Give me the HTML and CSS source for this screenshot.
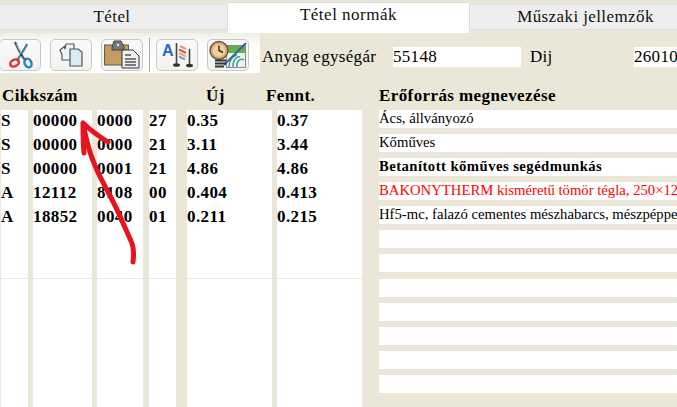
FILE: index.html
```html
<!DOCTYPE html>
<html lang="hu">
<head>
<meta charset="utf-8">
<title>Tétel normák</title>
<link rel="stylesheet" href="styles.css">
</head>
<body>
<nav class="tabs">
  <div class="tab tab-first">Tétel</div>
  <div class="tab tab-active">Tétel normák</div>
  <div class="tab tab-last">Műszaki jellemzők</div>
</nav>
<div class="bar">
  <div class="tools">
    <button class="tool tool-cut">
      <svg width="26" height="28" viewBox="0 0 26 28"><path d="M8 1 C10 6 13 12 17 18" stroke="#4d5560" stroke-width="2.200" fill="none"/><path d="M20 3 C18 8 14 13 11 18" stroke="#3f80ad" stroke-width="2.200" fill="none"/><path d="M9.500 3 L14 12" stroke="#d7dde2" stroke-width=".8" fill="none"/><circle cx="14.500" cy="14" r="1" fill="#333"/><ellipse cx="7.500" cy="22" rx="4.500" ry="3.300" fill="none" stroke="#d8383a" stroke-width="2.500" transform="rotate(-25 7.500 22)"/><ellipse cx="21" cy="22" rx="3.300" ry="4.500" fill="none" stroke="#2f86b8" stroke-width="2.500" transform="rotate(-25 21 22)"/><path d="M11.500 17.500 L10 20" stroke="#c33" stroke-width="2.500"/><path d="M17 17.500 L19 19.500" stroke="#27a" stroke-width="2.500"/></svg>
    </button>
    <button class="tool tool-copy">
      <svg width="24" height="24" viewBox="0 0 24 24"><path d="M1 7 L6 3 V6 L7 1 H15 V17 H3 V12 Z" fill="#f0f3f4" stroke="#555" stroke-width="1.200" stroke-linejoin="round"/><path d="M11 6 H19 L23 9 V23 H11 Z" fill="#d9ebf4" stroke="#555" stroke-width="1.200" stroke-linejoin="round"/></svg>
    </button>
    <button class="tool tool-paste">
      <svg width="36" height="30" viewBox="0 0 36 30"><rect x="0.500" y="5" width="24" height="20" fill="#c39c62" stroke="#6a5a3c"/><path d="M8 7 L10 1 H17 L20 7 V10 H8 Z" fill="#777" stroke="#444"/><circle cx="14" cy="5" r="1.300" fill="#ddd"/><path d="M18 10 H29 L35 16 V28 H18 Z" fill="#eef0f0" stroke="#333"/><path d="M21 15 H27 M21 19 H32 M21 22 H32 M21 25 H32" stroke="#555" stroke-width="1.300"/></svg>
    </button>
    <span class="sep"></span>
    <button class="tool tool-abc">
      <svg width="32" height="28" viewBox="0 0 32 28"><text class="icon-a" x="1" y="15">A</text><path d="M15.500 2 V24 M28.500 8 V24" stroke="#444" stroke-width="1.600"/><path d="M19 5 L25 8" stroke="#e09090" stroke-width="2"/><path d="M18 8.500 L25 12" stroke="#d8583a" stroke-width="2"/><path d="M18 12 L25 15.500" stroke="#e8b05a" stroke-width="2"/><path d="M18 15.500 L24 18.500" stroke="#7a9ad8" stroke-width="2"/><ellipse cx="15.500" cy="24" rx="3.500" ry="1.800" fill="#333"/><ellipse cx="28.500" cy="24.500" rx="3.500" ry="1.800" fill="#333"/></svg>
    </button>
    <button class="tool tool-plan">
      <svg width="38" height="30" viewBox="0 0 38 30"><rect x="17.500" y="5.500" width="19" height="22" fill="#eef5ee" stroke="#888"/><rect x="18" y="6" width="18" height="7" fill="#6cae48"/><path d="M20 27 A9 12 0 0 1 28 15 M24 27 A6 9 0 0 1 31 17 M28 27 A5 6 0 0 1 35 20" fill="none" stroke="#3f9c9c" stroke-width="1.500"/><path d="M15 25 L37 3" stroke="#2c6aa0" stroke-width="2"/><circle cx="10" cy="10.500" r="9" fill="#e8a868" stroke="#555" stroke-width="1.400"/><circle cx="10" cy="10.500" r="6.200" fill="#f3cfa4"/><path d="M10 5.500 V10.500 L14 12.500" fill="none" stroke="#333" stroke-width="1.500"/><path d="M6 20.500 H17 M6 23.500 H17 M6 26.500 H15" stroke="#333" stroke-width="1.800"/></svg>
    </button>
  </div>
  <span class="lbl lbl-price">Anyag egységár</span>
  <span class="val val-price">55148</span>
  <span class="lbl lbl-fee">Dij</span>
  <span class="val val-fee">26010</span>
</div>
<div class="heads">
  <span class="h-code">Cikkszám</span>
  <span class="h-new">Új</span>
  <span class="h-rem">Fennt.</span>
  <span class="h-name">Erőforrás megnevezése</span>
</div>
<main class="grid">
  <section class="left">
    <div class="cols upper">
      <div class="col c1"><div>S</div><div>S</div><div>S</div><div>A</div><div>A</div></div>
      <div class="col c2"><div>00000</div><div>00000</div><div>00000</div><div>12112</div><div>18852</div></div>
      <div class="col c3"><div>0000</div><div>0000</div><div>0001</div><div>8108</div><div>0040</div></div>
      <div class="col c4"><div>27</div><div>21</div><div>21</div><div>00</div><div>01</div></div>
      <div class="col c5"><div>0.35</div><div>3.11</div><div>4.86</div><div>0.404</div><div>0.211</div></div>
      <div class="col c6"><div>0.37</div><div>3.44</div><div>4.86</div><div>0.413</div><div>0.215</div></div>
    </div>
    <div class="cols lower">
      <div class="col c1"></div><div class="col c2"></div><div class="col c3"></div>
      <div class="col c4"></div><div class="col c5"></div><div class="col c6"></div>
    </div>
  </section>
  <section class="right">
    <div class="row">Ács, állványozó</div>
    <div class="row">Kőműves</div>
    <div class="row strong">Betanított kőműves segédmunkás</div>
    <div class="row alert">BAKONYTHERM kisméretű tömör tégla, 250×120×65 mm</div>
    <div class="row">Hf5-mc, falazó cementes mészhabarcs, mészpéppel</div>
    <div class="row"></div>
    <div class="row shift"></div>
    <div class="row"></div>
    <div class="row"></div>
    <div class="row"></div>
    <div class="row"></div>
    <div class="row"></div>
  </section>
</main>
<svg class="arrow" width="677" height="407" viewBox="0 0 677 407"><path d="M133 262 C134 254 134 247 131 241 C127 232 123 223 119 214 C112 198 103 184 96 168 C91 157 86 140 83 123 M83 123 C90 130 100 137 108 142 M83 123 C83 132 83 144 84 153" fill="none" stroke="#e8141c" stroke-width="5" stroke-linecap="round" stroke-linejoin="round"/></svg>
</body>
</html>
```
FILE: styles.css
```css
html, body {
  margin: 0;
  height: 407px;
  overflow: hidden;
}
body {
  background: #ebe7d8;
  font-family: "Liberation Serif", "Times New Roman", serif;
  font-size: 17px;
  color: #000;
  position: relative;
}
.tabs {
  display: flex;
  height: 33px;
  align-items: flex-start;
}
.tab {
  box-sizing: border-box;
  text-align: center;
  color: #111;
  letter-spacing: 0.4px;
}
.tab-first, .tab-last {
  margin-top: 4px;
  height: 26px;
  background: #eeeeee;
  border: 1px solid #dcdcdc;
  border-top-color: #e2e2e2;
  line-height: 24px;
}
.tab-first { width: 228px; border-left: 0; padding-right: 3px; }
.tab-active {
  margin-top: 2px;
  width: 241px;
  height: 31px;
  background: #fff;
  border-top: 1px solid #dcdcdc;
  line-height: 24px;
  letter-spacing: 0.5px;
}
.tab-last { width: 208px; border-right: 0; padding-left: 24px; }
.bar {
  display: flex;
  align-items: center;
  height: 40px;
}
.tools {
  width: 260px;
  height: 40px;
  flex: none;
  display: flex;
  align-items: center;
  background: linear-gradient(#f0efe8, #fcfcfa 30%, #fff);
  box-sizing: border-box;
  padding-top: 3px;
  gap: 9px;
}
.tool {
  box-sizing: border-box;
  width: 42px;
  height: 32px;
  padding: 0;
  border: 1px solid #c8c8c8;
  border-radius: 5px;
  background: linear-gradient(#fafafa, #f2f2f0);
  display: flex;
  align-items: center;
  justify-content: center;
}
.tool-cut { margin-left: -1px; }
.sep {
  width: 1px;
  height: 34px;
  background: #aaa;
  margin: 0 -3px;
  flex: none;
}
.icon-a {
  font-family: "Liberation Sans", Arial, sans-serif;
  font-weight: 700;
  font-size: 16px;
  fill: #2a6cc0;
}
.lbl, .val { letter-spacing: 0.3px; }
.lbl-price { margin-left: 2px; width: 131px; flex: none; padding-top: 7px; }
.val {
  background: #fff;
  height: 20px;
  line-height: 20px;
  margin-top: 8px;
  flex: none;
}
.val-price { width: 128px; }
.lbl-fee { margin-left: 9px; width: 104px; flex: none; padding-top: 7px; }
.val-fee { flex: 1; }
.heads {
  height: 37px;
  font-weight: 700;
  letter-spacing: 0.4px;
  display: grid;
  grid-template-columns: 204px 60px 113px 1fr;
  align-items: start;
  box-sizing: border-box;
  padding-left: 2px;
  line-height: 20px;
}
.heads span { padding-top: 13px; }
.h-code { grid-column: 1; }
.h-new { grid-column: 2; }
.h-rem { grid-column: 3; }
.h-name { grid-column: 4; }
.grid {
  display: flex;
  height: 297px;
}
.left {
  width: 379px;
  flex: none;
  display: flex;
  flex-direction: column;
}
.cols {
  display: flex;
  padding-left: 1px;
  gap: 5px;
  font-weight: 700;
  letter-spacing: 0.4px;
}
.upper { height: 168px; }
.lower { flex: 1; margin-top: 1px; }
.col { background: #fff; }
.col div { height: 24px; line-height: 22px; }
.c1 { width: 27px; }
.c2 { width: 59px; }
.c3 { width: 46px; }
.c4 { width: 27px; margin-left: 1px; }
.c5 { width: 85px; margin-left: 6px; }
.c6 { width: 85px; }
.right {
  flex: 1;
  min-width: 0;
  display: flex;
  flex-direction: column;
  gap: 6px;
}
.row {
  height: 18px;
  flex: none;
  background: #fff;
  font-size: 14.7px;
  line-height: 17px;
  white-space: nowrap;
  overflow: hidden;
}
.strong { font-weight: 700; letter-spacing: 0.45px; }
.alert { color: #ff0000; }
.shift { margin-bottom: 1px; }
.arrow {
  position: absolute;
  left: 0;
  top: 0;
  pointer-events: none;
}
```
